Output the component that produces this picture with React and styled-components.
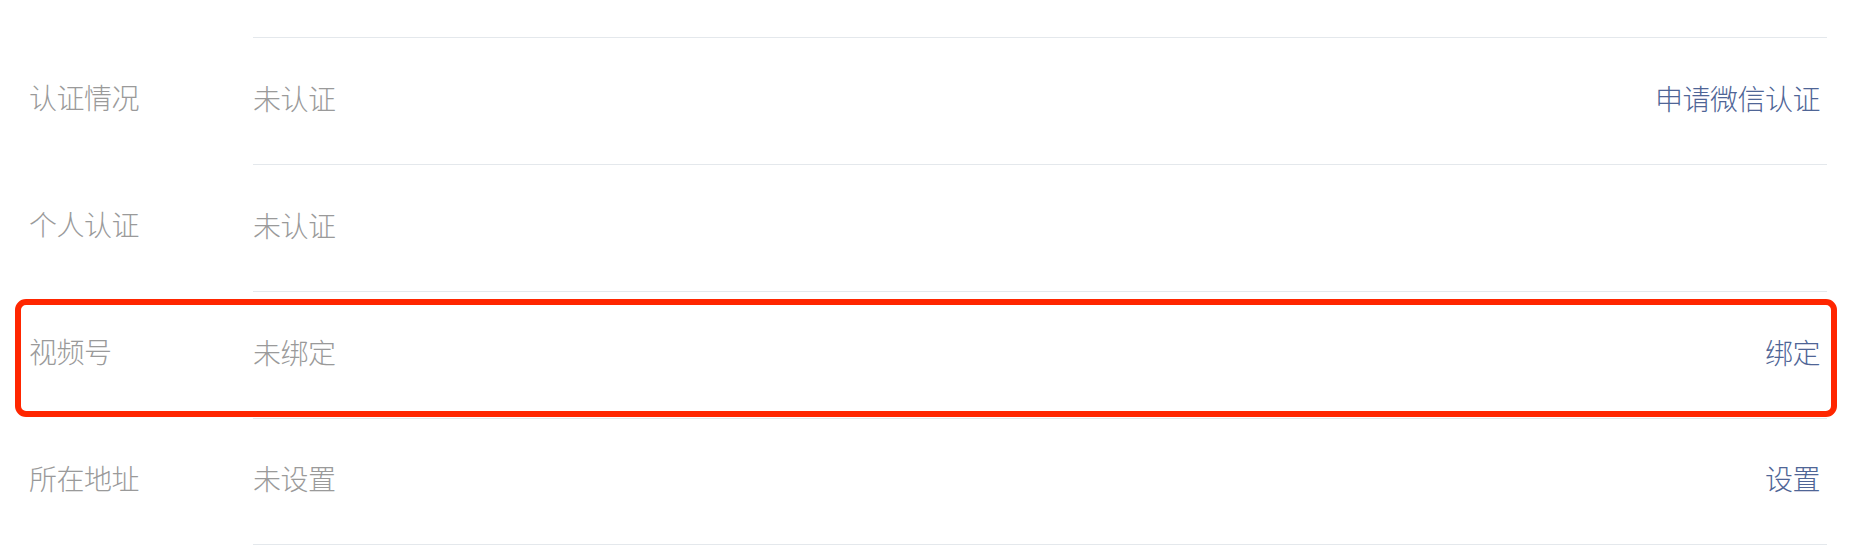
import React from 'react'
import styled, { createGlobalStyle } from 'styled-components'

const GlobalStyle = createGlobalStyle`
    * {
        box-sizing: border-box;
    }
    body {
        margin: 0;
        background: #ffffff;
        font-family: "Noto Sans CJK SC", "Noto Sans", sans-serif;
    }
`

const rows = [
    { label: '认证情况', value: '未认证', action: '申请微信认证' },
    { label: '个人认证', value: '未认证' },
    { label: '视频号', value: '未绑定', action: '绑定', highlight: true },
    { label: '所在地址', value: '未设置', action: '设置' },
]

const App = () => {
    return (
        <>
            <GlobalStyle />
            <List>
                {rows.map((row, i) => (
                    <Row key={row.label}>
                        <Label>{row.label}</Label>
                        <Cell $last={i === rows.length - 1}>
                            <Value>{row.value}</Value>
                            {row.action && <Action>{row.action}</Action>}
                        </Cell>
                        {row.highlight && <Highlight />}
                    </Row>
                ))}
            </List>
        </>
    )
}

const List = styled.div`
    display: flex;
    flex-direction: column;
    padding-top: 37px;
    width: 1858px;
    height: 548px;
    overflow: hidden;
`

const Row = styled.div`
    position: relative;
    display: flex;
    height: 127px;
`

const Label = styled.div`
    display: flex;
    align-items: center;
    width: 253px;
    padding-left: 29px;
    padding-bottom: 7px;
    font-size: 28px;
    font-weight: 300;
    color: #9a9a9a;
    letter-spacing: -0.5px;
`

const Cell = styled.div`
    flex: 1;
    display: flex;
    align-items: center;
    justify-content: space-between;
    margin-right: 31px;
    padding-right: 7px;
    padding-bottom: 7px;
    border-top: 1px solid #e4e8ec;
    border-bottom: ${p => (p.$last ? '1px solid #e4e8ec' : 'none')};
`

const Value = styled.span`
    font-size: 28px;
    font-weight: 300;
    color: #9a9a9a;
    letter-spacing: -0.5px;
`

const Action = styled.span`
    font-size: 28px;
    font-weight: 300;
    color: #4f6596;
    letter-spacing: -0.5px;
    cursor: pointer;
`

const Highlight = styled.div`
    position: absolute;
    left: 15px;
    top: 8px;
    width: 1822px;
    height: 118px;
    border: 6px solid #ff2600;
    border-radius: 11px;
    pointer-events: none;
`

export default App
